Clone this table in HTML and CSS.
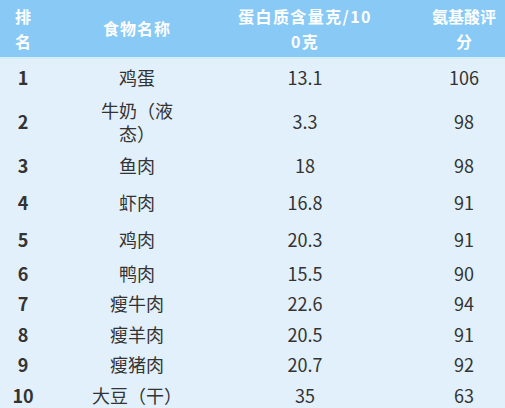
FILE: index.html
```html
<!DOCTYPE html>
<html lang="zh-CN">
<head>
<meta charset="utf-8">
<title>食物蛋白质排名</title>
<link rel="stylesheet" href="styles.css">
</head>
<body>
<div class="table">
  <div class="row head">
    <div class="cell rank"><span class="narrow">排名</span></div>
    <div class="cell food">食物名称</div>
    <div class="cell protein"><span class="wrap">蛋白质含量克/100克</span></div>
    <div class="cell amino">氨基酸评分</div>
  </div>
  <div class="row tall">
    <div class="cell rank">1</div>
    <div class="cell food">鸡蛋</div>
    <div class="cell protein">13.1</div>
    <div class="cell amino">106</div>
  </div>
  <div class="row double">
    <div class="cell rank">2</div>
    <div class="cell food">牛奶（液态）</div>
    <div class="cell protein">3.3</div>
    <div class="cell amino">98</div>
  </div>
  <div class="row tall">
    <div class="cell rank">3</div>
    <div class="cell food">鱼肉</div>
    <div class="cell protein">18</div>
    <div class="cell amino">98</div>
  </div>
  <div class="row tall">
    <div class="cell rank">4</div>
    <div class="cell food">虾肉</div>
    <div class="cell protein">16.8</div>
    <div class="cell amino">91</div>
  </div>
  <div class="row tall">
    <div class="cell rank">5</div>
    <div class="cell food">鸡肉</div>
    <div class="cell protein">20.3</div>
    <div class="cell amino">91</div>
  </div>
  <div class="row short">
    <div class="cell rank">6</div>
    <div class="cell food">鸭肉</div>
    <div class="cell protein">15.5</div>
    <div class="cell amino">90</div>
  </div>
  <div class="row short">
    <div class="cell rank">7</div>
    <div class="cell food">瘦牛肉</div>
    <div class="cell protein">22.6</div>
    <div class="cell amino">94</div>
  </div>
  <div class="row short">
    <div class="cell rank">8</div>
    <div class="cell food">瘦羊肉</div>
    <div class="cell protein">20.5</div>
    <div class="cell amino">91</div>
  </div>
  <div class="row short">
    <div class="cell rank">9</div>
    <div class="cell food">瘦猪肉</div>
    <div class="cell protein">20.7</div>
    <div class="cell amino">92</div>
  </div>
  <div class="row short">
    <div class="cell rank">10</div>
    <div class="cell food">大豆（干）</div>
    <div class="cell protein">35</div>
    <div class="cell amino">63</div>
  </div>
</div>
</body>
</html>
```
FILE: styles.css
```css
html, body {
  margin: 0;
  padding: 0;
}
body {
  background: #e2f0fb;
  color: #333333;
  font-family: "Noto Sans CJK SC", "Noto Sans", sans-serif;
  font-size: 18px;
  line-height: 23px;
  overflow: hidden;
}
.table {
  display: flex;
  flex-direction: column;
  width: 505px;
}
.row {
  display: grid;
  grid-template-columns: 46px 182px 154px 123px;
  align-items: center;
  text-align: center;
}
.cell {
  justify-self: center;
}
.rank {
  font-weight: 700;
}
.food {
  width: 92px;
}
.amino {
  justify-self: end;
  width: 72px;
  margin-right: 5px;
}
.head {
  height: 57px;
  background: #88c9f5;
  color: #ffffff;
  font-weight: 700;
  font-size: 16px;
  line-height: 25px;
  border-bottom: 2px solid #d2eefb;
}
.head .food {
  letter-spacing: 1px;
}
.narrow {
  display: block;
  width: 20px;
}
.wrap {
  display: block;
  width: 138px;
  word-break: break-all;
  letter-spacing: 1.4px;
}
.tall {
  height: 37px;
}
.double {
  height: 51px;
}
.short {
  height: 30.5px;
}
```
